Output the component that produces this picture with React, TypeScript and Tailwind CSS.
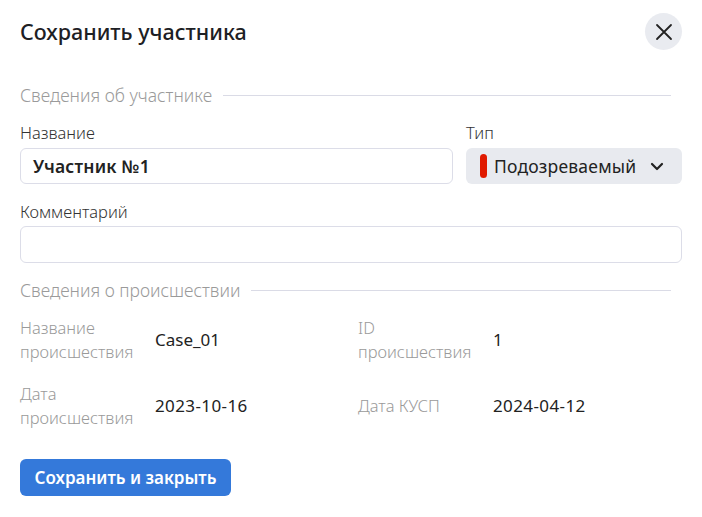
import React from "react";

export default function App() {
  const font = { fontFamily: '"Noto Sans", "Open Sans", sans-serif' };
  return (
    <div className="w-[702px] h-[517px] bg-white px-5 pt-[13px] text-[#222]" style={font}>
      <div className="flex items-center justify-between">
        <h1 className="text-[21.5px] font-medium text-[#1d2024] leading-[37px]">Сохранить участника</h1>
        <button className="w-[37px] h-[37px] rounded-full bg-[#e9ebf0] flex items-center justify-center">
          <svg width="18" height="18" viewBox="0 0 18 18" fill="none" stroke="#222" strokeWidth="1.8" strokeLinecap="round">
            <path d="M2 2 L16 16 M16 2 L2 16" />
          </svg>
        </button>
      </div>

      <div className="mt-[33px] flex items-center gap-[11px] pr-[11px]">
        <span className="text-[17.5px] leading-[24px] font-light text-[#9a9a9a]">Сведения об участнике</span>
        <div className="flex-1 h-px bg-[#dadbe6]" />
      </div>

      <div className="mt-[14px] flex gap-[13px]">
        <div className="flex-1">
          <div className="text-[16.5px] leading-[24px] font-light text-[#333]">Название</div>
          <div className="mt-[3px] h-[36px] rounded-[6px] border border-[#dcdde8] flex items-center px-3">
            <span className="text-[17.5px] font-semibold text-[#222] tracking-[0.2px]">Участник №1</span>
          </div>
        </div>
        <div className="w-[216px]">
          <div className="text-[16.5px] leading-[24px] font-light text-[#333]">Тип</div>
          <div className="mt-[3px] h-[36px] rounded-[6px] bg-[#e8eaef] flex items-center pl-[14px] pr-[18px]">
            <span className="w-[7px] h-[24px] rounded-full bg-[#e01a00]" />
            <span className="ml-[7px] text-[17.5px] text-[#222] flex-1 tracking-[0.2px]">Подозреваемый</span>
            <svg width="14" height="10" viewBox="0 0 14 10" fill="none" stroke="#222" strokeWidth="2.2" strokeLinecap="round" strokeLinejoin="round">
              <path d="M2 3 L7 8 L12 3" />
            </svg>
          </div>
        </div>
      </div>

      <div className="mt-[16px]">
        <div className="text-[16.5px] leading-[24px] font-light text-[#333]">Комментарий</div>
        <div className="mt-[2px] h-[37px] rounded-[6px] border border-[#dcdde8]" />
      </div>

      <div className="mt-[15px] flex items-center gap-[11px] pr-[11px]">
        <span className="text-[17.5px] leading-[24px] font-light text-[#9a9a9a]">Сведения о происшествии</span>
        <div className="flex-1 h-px bg-[#dadbe6]" />
      </div>

      <div className="mt-[14px] grid grid-cols-[135px_203px_135px_1fr] gap-y-[18px] items-center">
        <div className="text-[16.5px] leading-[24px] font-light text-[#9a9a9a]">Название<br />происшествия</div>
        <div className="text-[17px] text-[#222]">Case_01</div>
        <div className="text-[16.5px] leading-[24px] font-light text-[#9a9a9a]">ID<br />происшествия</div>
        <div className="text-[17px] text-[#222]">1</div>
        <div className="text-[16.5px] leading-[24px] font-light text-[#9a9a9a]">Дата<br />происшествия</div>
        <div className="text-[17px] text-[#222] tracking-[0.4px]">2023-10-16</div>
        <div className="text-[16.5px] leading-[24px] font-light text-[#9a9a9a]">Дата КУСП</div>
        <div className="text-[17px] text-[#222] tracking-[0.4px]">2024-04-12</div>
      </div>

      <button className="mt-[29px] h-[37px] w-[211px] rounded-[6px] bg-[#3479da] text-white text-[17px] font-semibold">
        Сохранить и закрыть
      </button>
    </div>
  );
}
